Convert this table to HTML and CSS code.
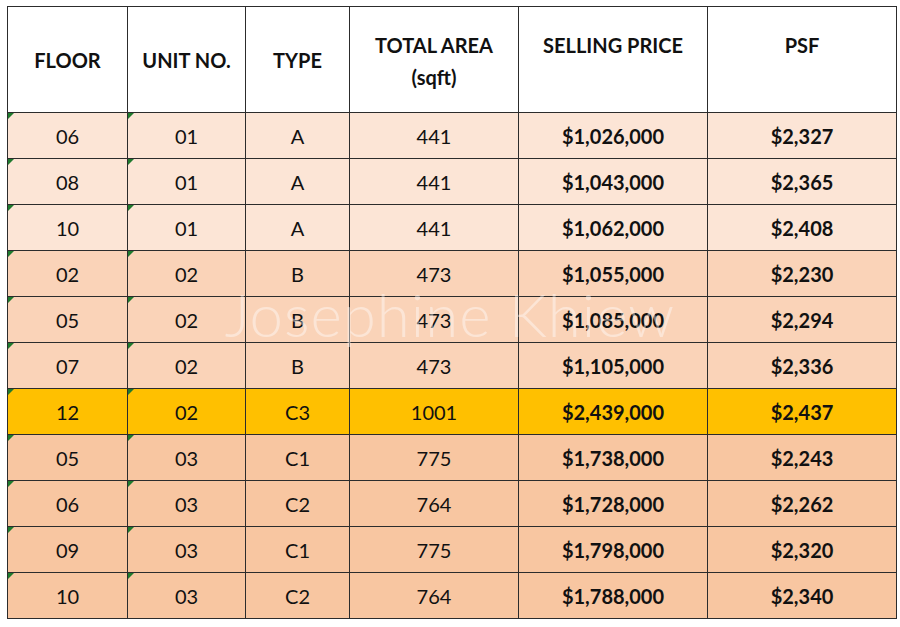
FILE: index.html
```html
<!DOCTYPE html>
<html>
<head>
<meta charset="utf-8">
<link rel="stylesheet" href="styles.css">
</head>
<body>
<div class="sheet">
  <table class="prices">
    <colgroup>
      <col class="c-floor"><col class="c-unit"><col class="c-type"><col class="c-area"><col class="c-price"><col class="c-psf">
    </colgroup>
    <thead>
      <tr class="head">
        <th class="mid">FLOOR</th>
        <th class="mid">UNIT NO.</th>
        <th class="mid">TYPE</th>
        <th class="top">TOTAL AREA<br>(sqft)</th>
        <th class="top">SELLING PRICE</th>
        <th class="top">PSF</th>
      </tr>
    </thead>
    <tbody>
      <tr class="r-a"><td class="flag">06</td><td class="flag">01</td><td>A</td><td>441</td><td class="b">$1,026,000</td><td class="b">$2,327</td></tr>
      <tr class="r-a"><td class="flag">08</td><td class="flag">01</td><td>A</td><td>441</td><td class="b">$1,043,000</td><td class="b">$2,365</td></tr>
      <tr class="r-a"><td class="flag">10</td><td class="flag">01</td><td>A</td><td>441</td><td class="b">$1,062,000</td><td class="b">$2,408</td></tr>
      <tr class="r-b"><td class="flag">02</td><td class="flag">02</td><td>B</td><td>473</td><td class="b">$1,055,000</td><td class="b">$2,230</td></tr>
      <tr class="r-b"><td class="flag">05</td><td class="flag">02</td><td>B</td><td>473</td><td class="b">$1,085,000</td><td class="b">$2,294</td></tr>
      <tr class="r-b"><td class="flag">07</td><td class="flag">02</td><td>B</td><td>473</td><td class="b">$1,105,000</td><td class="b">$2,336</td></tr>
      <tr class="r-hi"><td class="flag">12</td><td class="flag">02</td><td>C3</td><td>1001</td><td class="b">$2,439,000</td><td class="b">$2,437</td></tr>
      <tr class="r-c"><td class="flag">05</td><td class="flag">03</td><td>C1</td><td>775</td><td class="b">$1,738,000</td><td class="b">$2,243</td></tr>
      <tr class="r-c"><td class="flag">06</td><td class="flag">03</td><td>C2</td><td>764</td><td class="b">$1,728,000</td><td class="b">$2,262</td></tr>
      <tr class="r-c"><td class="flag">09</td><td class="flag">03</td><td>C1</td><td>775</td><td class="b">$1,798,000</td><td class="b">$2,320</td></tr>
      <tr class="r-c"><td class="flag">10</td><td class="flag">03</td><td>C2</td><td>764</td><td class="b">$1,788,000</td><td class="b">$2,340</td></tr>
    </tbody>
  </table>
  <div class="watermark">Josephine Khiew</div>
</div>
</body>
</html>
```

FILE: styles.css
```css
html, body {
  margin: 0;
  padding: 0;
  background: #ffffff;
}

body {
  font-family: Lato, "Open Sans", sans-serif;
  color: #111111;
}

.sheet {
  position: relative;
  padding: 6px 0 0 7px;
}

.prices {
  border-collapse: collapse;
  table-layout: fixed;
  width: 889px;
}

.c-floor { width: 120px; }
.c-unit { width: 118px; }
.c-type { width: 104px; }
.c-area { width: 169px; }
.c-price { width: 189px; }
.c-psf { width: 189px; }

.prices th,
.prices td {
  border: 1px solid #2c2c2c;
  text-align: center;
  padding: 0;
}

.prices tr.head {
  height: 106px;
}

.prices th {
  font-size: 20px;
  font-weight: 700;
  line-height: 32px;
  background: #ffffff;
}

.prices th.mid {
  vertical-align: middle;
}

.prices th.top {
  vertical-align: top;
  padding-top: 22px;
}

.prices tbody tr {
  height: 46px;
}

.prices td {
  font-size: 20px;
  font-weight: 400;
  position: relative;
}

.prices td.b {
  font-weight: 700;
}

.r-a td { background: #fce5d6; }
.r-b td { background: #fad3b8; }
.r-hi td { background: #ffc000; }
.r-c td { background: #f8c6a1; }

.prices td.flag::before {
  content: "";
  position: absolute;
  left: 0;
  top: 0;
  width: 0;
  height: 0;
  border-top: 6px solid #1f7a2e;
  border-right: 6px solid transparent;
}

.watermark {
  position: absolute;
  left: 0;
  top: 278px;
  width: 900px;
  text-align: center;
  font-family: Lato, "Open Sans", sans-serif;
  font-weight: 300;
  font-size: 60px;
  letter-spacing: 1px;
  color: rgba(255, 255, 255, 0.42);
  pointer-events: none;
}
```
